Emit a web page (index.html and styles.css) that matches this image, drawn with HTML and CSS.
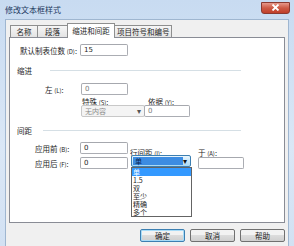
FILE: index.html
```html
<!DOCTYPE html>
<html lang="zh-CN">
<head>
    <meta charset="UTF-8">
    <title>修改文本框样式</title>
    <link rel="stylesheet" href="styles.css">
</head>
<body>
    <div class="window">
        <div class="titlebar">
            <span class="title">修改文本框样式</span>
            <span class="close">
                <svg width="9" height="7" viewBox="0 0 9 7"><path d="M1.5 0.5 L7.5 6.5 M7.5 0.5 L1.5 6.5" stroke="#fff" stroke-width="1.8"/></svg>
            </span>
        </div>
        <div class="client">
            <div class="tabs">
                <span class="tab t1">名称</span>
                <span class="tab t2">段落</span>
                <span class="tab active">缩进和间距</span>
                <span class="tab t4">项目符号和编号</span>
            </div>
            <div class="panel">
                <div class="row r-tab">
                    <span class="lbl l-tab">默认制表位数 <small>(D)</small>:</span>
                    <span class="field f-tab">15</span>
                </div>

                <div class="section s-indent">
                    <span class="sec-title">缩进</span>
                    <span class="rule"></span>
                </div>
                <div class="row r-left">
                    <span class="lbl l-left">左 <small>(L)</small>:</span>
                    <span class="field f-left grey">0</span>
                </div>
                <div class="row r-caps">
                    <span class="lbl l-special">特殊 <small>(S)</small>:</span>
                    <span class="lbl l-by">依据 <small>(Y)</small>:</span>
                </div>
                <div class="row r-special">
                    <span class="field combo disabled">无内容<span class="arrow">▾</span></span>
                    <span class="field f-by grey">0</span>
                </div>

                <div class="section s-space">
                    <span class="sec-title">间距</span>
                    <span class="rule"></span>
                </div>
                <div class="row r-before">
                    <span class="lbl l-before">应用前 <small>(B)</small>:</span>
                    <span class="field f-num">0</span>
                    <span class="lbl l-line">行间距 <small>(I)</small>:</span>
                    <span class="lbl l-at">于 <small>(A)</small>:</span>
                </div>
                <div class="row r-after">
                    <span class="lbl l-before">应用后 <small>(F)</small>:</span>
                    <span class="field f-num">0</span>
                    <div class="linesel">
                        <span class="field combo focus"><span class="val">单</span><span class="arrow">▾</span></span>
                        <ul class="droplist">
                            <li class="sel">单</li>
                            <li>1.5</li>
                            <li>双</li>
                            <li>至少</li>
                            <li>精确</li>
                            <li>多个</li>
                        </ul>
                    </div>
                    <span class="field f-at"></span>
                </div>
            </div>
            <div class="buttons">
                <span class="btn default">确定</span>
                <span class="btn">取消</span>
                <span class="btn">帮助</span>
            </div>
        </div>
    </div>
</body>
</html>
```

FILE: styles.css
```css
body {
    margin: 0;
    font-family: "Noto Sans CJK SC", "DejaVu Sans", sans-serif;
    font-size: 7.5px;
    color: #1e1e1e;
    background-color: #c7daf0;
}
small {
    font-size: 6px;
}
.window {
    width: 294px;
    height: 246px;
    overflow: hidden;
    background: linear-gradient(to bottom, #c8dbf1, #dae7f6 60%, #d2e1f3);
}
.titlebar {
    height: 18px;
    display: flex;
    align-items: center;
    justify-content: space-between;
    padding: 0 4px 0 5px;
}
.title {
    color: #1d3a5f;
    font-size: 8px;
    margin-top: 1px;
}
.close {
    width: 27px;
    height: 10px;
    margin-top: -3px;
    display: flex;
    align-items: center;
    justify-content: center;
    border: 1px solid #8a3a31;
    border-radius: 0 0 3px 3px;
    background: linear-gradient(to bottom, #e6988a, #cd5a45 50%, #c03f2a);
}
.client {
    margin: 1px 5px 0 5px;
    height: 227px;
    background-color: #f0f0f0;
    border: 1px solid #9fb6d0;
    border-bottom: none;
    padding: 3px 3px 0 3px;
}
.tabs {
    display: flex;
    height: 14px;
    align-items: flex-end;
    padding-left: 1px;
}
.tab {
    height: 12px;
    line-height: 12px;
    padding: 0 2px;
    border: 1px solid #8e8f8f;
    border-bottom: none;
    margin-right: -1px;
    background: linear-gradient(to bottom, #f6f6f6, #e3e3e3);
    text-align: center;
    box-sizing: border-box;
    white-space: nowrap;
}
.t1 { width: 28px; }
.t2 { width: 31px; }
.t4 { width: 58px; }
.tab.active {
    width: 48px;
    height: 15px;
    line-height: 14px;
    background: #fff;
    position: relative;
    z-index: 1;
    margin-bottom: -1px;
}
.panel {
    position: relative;
    height: 186px;
    background-color: #fff;
    border: 1px solid #898c95;
    box-sizing: border-box;
}
.row {
    display: flex;
    align-items: center;
}
.lbl {
    white-space: nowrap;
}
.field {
    box-sizing: border-box;
    height: 12px;
    line-height: 10px;
    border: 1px solid #abadb3;
    border-top-color: #a6a8ae;
    border-radius: 2px;
    padding: 0 3px;
    background: #fff;
    font-family: "DejaVu Sans", "Noto Sans CJK SC", sans-serif;
    font-size: 7px;
}
.grey { color: #7a7a7a; }
.r-tab {
    margin-top: 6px;
    padding-left: 10px;
}
.l-tab { width: 60px; }
.f-tab { width: 48px; }
.section {
    display: flex;
    align-items: center;
    height: 10px;
    padding-left: 7px;
}
.s-indent { margin-top: 9px; }
.s-space { margin-top: 8px; }
.sec-title { margin-right: 18px; }
.s-space .sec-title { margin-right: 11px; }
.rule {
    width: 191px;
    height: 0;
    border-top: 1px solid #d5dfe5;
}
.s-space .rule { width: 198px; }
.r-left {
    margin-top: 8px;
    padding-left: 35px;
}
.l-left { width: 36px; }
.f-left { width: 47px; }
.r-caps {
    margin-top: 2px;
    height: 8px;
    padding-left: 72px;
}
.l-special { width: 66px; }
.r-special { padding-left: 71px; }
.combo {
    display: flex;
    justify-content: space-between;
    align-items: center;
    font-family: "Noto Sans CJK SC", sans-serif;
}
.combo.disabled {
    width: 64px;
    color: #8a8a8a;
    background: #f4f4f4;
    border-color: #c8c8c8;
}
.arrow {
    font-size: 8px;
    color: #555;
    line-height: 8px;
}
.f-by {
    width: 46px;
    margin-left: -1px;
}
.r-before {
    margin-top: 7px;
    padding-left: 25px;
}
.l-before { width: 45px; }
.f-num { width: 48px; }
.l-line {
    width: 68px;
    margin-left: 2px;
    align-self: flex-end;
    margin-bottom: -4px;
}
.l-at {
    align-self: flex-end;
    margin-bottom: -4px;
}
.r-after {
    margin-top: 3px;
    padding-left: 25px;
}
.linesel {
    position: relative;
    width: 60px;
    margin-left: 3px;
    margin-top: -4px;
}
.combo.focus {
    width: 60px;
    border-color: #3c7fb1;
    background: linear-gradient(to bottom, #eaf6fd, #a7d9f5);
    padding: 1px 3px 1px 1px;
}
.combo.focus .val {
    flex: 1;
    height: 8px;
    line-height: 8px;
    padding-left: 2px;
    background: #3c8ce2;
    color: #0b2550;
}
.combo.focus .arrow { color: #111; }
.droplist {
    position: absolute;
    left: 0;
    top: 12px;
    width: 61px;
    height: 50px;
    box-sizing: border-box;
    margin: 0;
    padding: 0;
    list-style: none;
    background: #fff;
    border: 1px solid #646464;
    z-index: 2;
}
.droplist li {
    height: 8px;
    line-height: 8px;
    padding-left: 1px;
    font-size: 7px;
    white-space: nowrap;
}
.droplist li.sel {
    background: #3399ff;
    color: #fff;
}
.f-at {
    width: 46px;
    margin-left: 7px;
}
.buttons {
    display: flex;
    justify-content: flex-end;
    gap: 5px;
    margin-top: 6px;
}
.btn {
    width: 43px;
    height: 11px;
    line-height: 11px;
    text-align: center;
    border: 1px solid #707070;
    border-radius: 2px;
    background: linear-gradient(to bottom, #f2f2f2 45%, #dcdcdc 50%, #cfcfcf);
}
.btn.default {
    border-color: #3c7fb1;
    box-shadow: inset 0 0 0 1px #a8dcf8;
}
```
